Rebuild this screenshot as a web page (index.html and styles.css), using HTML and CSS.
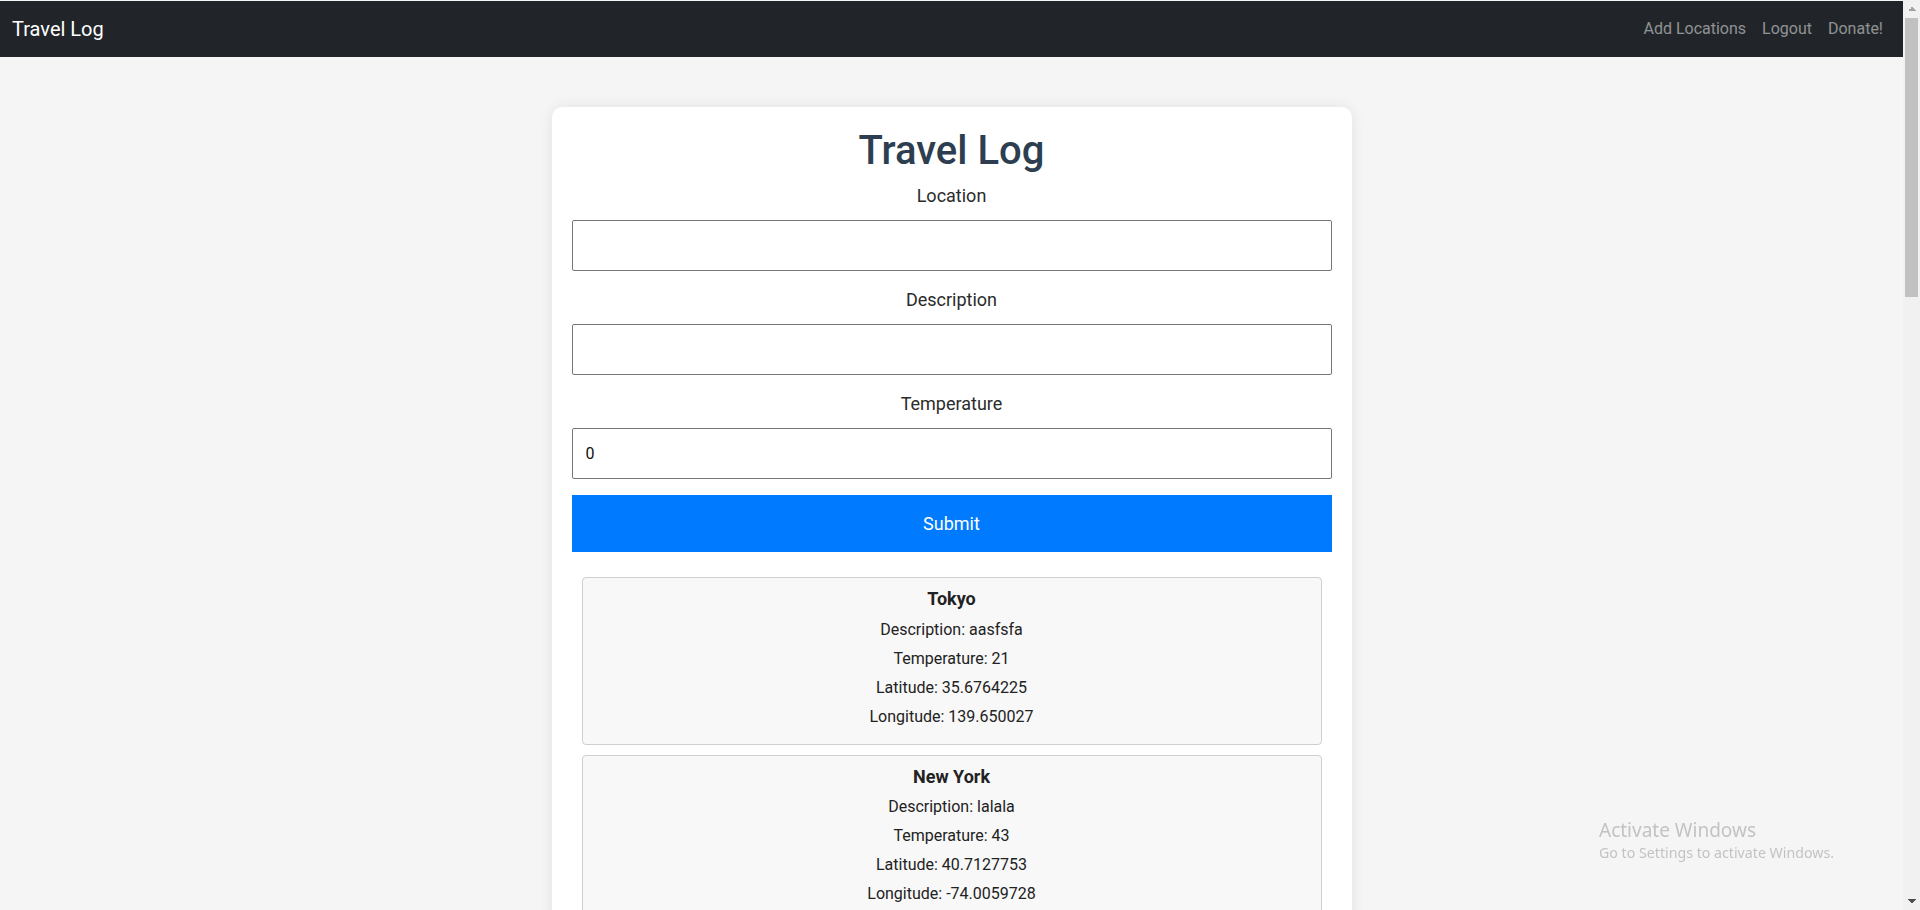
FILE: index.html
```html
<!DOCTYPE html>
<html lang="en">
<head>
<meta charset="utf-8">
<title>Travel Log</title>
<link rel="stylesheet" href="styles.css">
</head>
<body>
<nav class="navbar">
  <a class="brand" href="#">Travel Log</a>
  <ul class="nav-links">
    <li><a href="#">Add Locations</a></li>
    <li><a href="#">Logout</a></li>
    <li><a href="#">Donate!</a></li>
  </ul>
</nav>
<main class="page">
  <section class="panel">
    <h1 class="title">Travel Log</h1>
    <form class="log-form">
      <label class="field-label" for="loc">Location</label>
      <input class="field-input" id="loc" type="text">
      <label class="field-label" for="desc">Description</label>
      <input class="field-input" id="desc" type="text">
      <label class="field-label" for="temp">Temperature</label>
      <input class="field-input" id="temp" type="number" value="0">
      <button class="submit-btn" type="button">Submit</button>
    </form>
    <div class="entries">
      <div class="entry"><h3 class="entry-title">Tokyo</h3><p>Description: aasfsfa</p><p>Temperature: 21</p><p>Latitude: 35.6764225</p><p>Longitude: 139.650027</p></div>
      <div class="entry"><h3 class="entry-title">New York</h3><p>Description: lalala</p><p>Temperature: 43</p><p>Latitude: 40.7127753</p><p>Longitude: -74.0059728</p></div>
    </div>
  </section>
</main>
<div class="scrollbar" aria-hidden="true">
  <div class="sb-btn sb-up"></div>
  <div class="sb-track"><div class="sb-thumb"></div></div>
  <div class="sb-btn sb-down"></div>
</div>
<div class="watermark">
  <div class="wm-title">Activate Windows</div>
  <div class="wm-sub">Go to Settings to activate Windows.</div>
</div>
</body>
</html>
```
FILE: styles.css
```css
body {
  margin: 0;
  padding: 1px 17px 0 0;
  background: #f5f5f5;
  font-family: Roboto, "Liberation Sans", Arial, sans-serif;
  color: #212529;
}

.navbar {
  display: flex;
  align-items: center;
  justify-content: space-between;
  height: 56px;
  padding: 0 12px;
  background: #212529;
  box-sizing: border-box;
}
.brand {
  font-size: 20px;
  line-height: 30px;
  color: #fff;
  text-decoration: none;
}
.nav-links {
  display: flex;
  list-style: none;
  margin: 0;
  padding: 0;
}
.nav-links a {
  display: block;
  padding: 8px;
  font-size: 16px;
  line-height: 24px;
  color: rgba(255, 255, 255, 0.5);
  text-decoration: none;
}

.page {
  padding: 50px 0;
}
.panel {
  width: 800px;
  box-sizing: border-box;
  margin: 0 auto;
  padding: 20px;
  background: #fff;
  border-radius: 10px;
  box-shadow: 0 0 14px rgba(0, 0, 0, 0.08);
}
.title {
  margin: 0 0 7px;
  font-size: 40px;
  font-weight: 500;
  line-height: 1.2;
  color: #2c3e50;
  text-align: center;
}
.log-form {
  display: flex;
  flex-direction: column;
}
.field-label {
  display: block;
  margin-bottom: 11px;
  font-size: 18px;
  line-height: 27px;
  color: #2b2b2b;
  text-align: center;
}
.field-input {
  height: 51px;
  box-sizing: border-box;
  margin: 0 0 15px;
  padding: 0 13px;
  border: 1px solid #767676;
  border-radius: 2px;
  font-family: Roboto, "Liberation Sans", Arial, sans-serif;
  font-size: 16px;
  color: #111;
  background: #fff;
  -moz-appearance: textfield;
}
.field-input::-webkit-outer-spin-button,
.field-input::-webkit-inner-spin-button {
  -webkit-appearance: none;
  margin: 0;
}
.submit-btn {
  height: 57px;
  margin-top: 1px;
  border: none;
  border-radius: 0;
  background: #007bff;
  color: #fff;
  font-family: Roboto, "Liberation Sans", Arial, sans-serif;
  font-size: 18px;
}

.entries {
  display: flex;
  flex-direction: column;
  gap: 10px;
  margin-top: 15px;
  padding: 10px;
}
.entry {
  padding: 10px;
  border: 1px solid #cfcfcf;
  border-radius: 4px;
  background: #f8f8f8;
  text-align: center;
}
.entry-title {
  margin: 0 0 8px;
  font-size: 18px;
  font-weight: 700;
  line-height: 1.2;
  color: #222;
}
.entry p {
  margin: 5px 0;
  font-size: 16px;
  line-height: 24px;
  color: #222;
}

/* window scrollbar, drawn as an overlay */
.scrollbar {
  position: fixed;
  top: 0;
  right: 0;
  width: 17px;
  height: 100%;
  display: flex;
  flex-direction: column;
  background: #f1f1f1;
}
.sb-btn {
  height: 17px;
  flex: none;
  background-repeat: no-repeat;
  background-size: 8px 4px;
}
.sb-up {
  background-image: conic-gradient(from 135deg at 50% 0, #a3a3a3 90deg, transparent 0);
  background-position: 4.5px 7px;
}
.sb-down {
  background-image: conic-gradient(from -45deg at 50% 100%, #505050 90deg, transparent 0);
  background-position: 4.5px 6px;
}
.sb-track {
  flex: 1;
  padding: 1px 2px;
}
.sb-thumb {
  height: 279px;
  background: #c1c1c1;
}

.watermark {
  position: fixed;
  left: 1599px;
  top: 817px;
  font-family: "Noto Sans", "Open Sans", sans-serif;
  color: #c3c3c3;
  pointer-events: none;
}
.wm-title {
  font-size: 19px;
  line-height: 26px;
}
.wm-sub {
  font-size: 14.2px;
  line-height: 20px;
}
```
